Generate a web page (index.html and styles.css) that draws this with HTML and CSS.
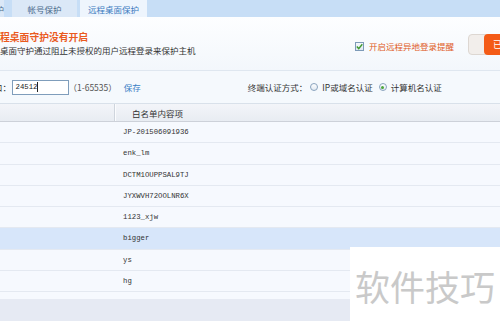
FILE: index.html
```html
<!DOCTYPE html>
<html lang="zh-CN">
<head>
<meta charset="utf-8">
<title>远程桌面保护</title>
<link rel="stylesheet" href="styles.css">
</head>
<body>
<div class="tabs">
  <div class="tab tab-cut">护</div>
  <div class="tab tab-account">帐号保护</div>
  <div class="tab tab-active">远程桌面保护</div>
</div>

<div class="status">
  <div class="status-text">
    <div class="status-title">程桌面守护没有开启</div>
    <div class="status-desc">桌面守护通过阻止未授权的用户远程登录来保护主机</div>
  </div>
  <label class="remind">
    <span class="checkbox">
      <svg width="9" height="9" viewBox="0 0 9 9"><path d="M1.8 4.6 L3.7 6.6 L7.3 2.2" fill="none" stroke="#3f9a2e" stroke-width="1.4"/></svg>
    </span>
    开启远程异地登录提醒
  </label>
  <div class="switch"><span class="switch-on">已开启</span></div>
</div>

<div class="port-row">
  <div class="port-left">
    <span class="port-label">口：</span>
    <span class="input"><span class="mono">24512</span><span class="caret"></span></span>
    <span class="range">（1-65535）</span>
    <a class="save">保存</a>
  </div>
  <div class="auth">
    <span class="auth-label">终端认证方式：</span>
    <span class="radio"></span><span class="radio-text">IP或域名认证</span>
    <span class="radio radio-on"></span><span class="radio-text">计算机名认证</span>
  </div>
</div>

<div class="table">
  <div class="thead">
    <div class="th th-first"></div>
    <div class="th th-name">白名单内容项</div>
  </div>
  <div class="tbody">
    <div class="tr"><div class="td"></div><div class="td mono">JP-201506091936</div></div>
    <div class="tr"><div class="td"></div><div class="td mono">enk_lm</div></div>
    <div class="tr"><div class="td"></div><div class="td mono">DCTM1OUPPSAL9TJ</div></div>
    <div class="tr"><div class="td"></div><div class="td mono">JYXWVH72OOLNR6X</div></div>
    <div class="tr"><div class="td"></div><div class="td mono">1123_xjw</div></div>
    <div class="tr tr-selected"><div class="td"></div><div class="td mono">bigger</div></div>
    <div class="tr"><div class="td"></div><div class="td mono">ys</div></div>
    <div class="tr"><div class="td"></div><div class="td mono">hg</div></div>
  </div>
</div>

<div class="watermark">软件技巧</div>
</body>
</html>
```

FILE: styles.css
```css
* {
  box-sizing: border-box;
  margin: 0;
  padding: 0;
}

body {
  width: 500px;
  height: 321px;
  overflow: hidden;
  position: relative;
  background: #e6eaf3;
  font-family: "Noto Sans CJK SC", sans-serif;
  font-size: 8.5px;
  color: #333;
}

.mono {
  font-family: "Liberation Mono", monospace;
  font-size: 7.3px;
}

/* tabs */
.tabs {
  display: flex;
  height: 17px;
  background: #c7def6;
}

.tab {
  height: 17px;
  display: flex;
  align-items: center;
  justify-content: center;
  background: #dbe8f7;
  color: #4c6b8c;
  white-space: nowrap;
  overflow: hidden;
}

.tab-cut {
  width: 4px;
  justify-content: flex-end;
}

.tab-account {
  width: 65px;
  margin-left: 8px;
}

.tab-active {
  width: 67px;
  margin-left: 3px;
  background: #eef5fd;
  color: #3b7bbf;
}

/* status */
.status {
  height: 53px;
  display: flex;
  align-items: center;
  background: linear-gradient(#fdfeff, #f3f7fc);
}

.status-text {
  flex: 1;
  align-self: flex-start;
  padding-top: 13px;
  white-space: nowrap;
  min-width: 0;
}

.status-title {
  font-size: 9.8px;
  line-height: 14px;
  font-weight: bold;
  color: #ea5a1e;
}

.status-desc {
  line-height: 12px;
  color: #333;
}

.remind {
  display: flex;
  align-items: center;
  gap: 5px;
  margin-top: 5px;
  color: #df5a25;
  white-space: nowrap;
}

.checkbox {
  width: 9px;
  height: 9px;
  border: 1px solid #7d9ab8;
  background: linear-gradient(#f4f8fc, #dfe8f2);
  display: flex;
}

.checkbox svg {
  margin: -1px;
}

.switch {
  flex-shrink: 0;
  width: 62px;
  height: 21px;
  margin-left: 14px;
  margin-right: -30px;
  margin-top: 2px;
  border: 1px solid #ddd7d2;
  border-radius: 4px;
  background: #f2eeeb;
  display: flex;
  justify-content: flex-end;
}

.switch-on {
  width: 46px;
  margin: -1px -1px -1px 0;
  border-radius: 4px 0 0 4px;
  background: #f45b17;
  color: #fff;
  display: flex;
  align-items: center;
  padding-left: 9px;
  font-size: 9px;
  white-space: nowrap;
}

/* port row */
.port-row {
  height: 33px;
  display: flex;
  align-items: center;
  border-top: 1px solid #dfe7f0;
  background: #f5f9fd;
  white-space: nowrap;
}

.port-left {
  display: flex;
  align-items: center;
}

.port-label {
  margin-left: -6px;
}

.input {
  width: 57px;
  height: 15px;
  margin-left: 0.5px;
  border: 1px solid #7f9dbb;
  background: #fff;
  display: flex;
  align-items: center;
  padding-left: 3px;
  color: #222;
}

.caret {
  width: 1px;
  height: 10px;
  background: #222;
}

.range {
  color: #555;
}

.save {
  margin-left: 7px;
  color: #3c7fc6;
}

.auth {
  display: flex;
  align-items: center;
  margin-left: 107px;
}

.auth-label {
  margin-right: 3px;
}

.radio {
  width: 8px;
  height: 8px;
  border: 1px solid #8aa3be;
  border-radius: 50%;
  background: linear-gradient(#fdfeff, #e1e9f2);
  margin-right: 4px;
  display: flex;
  align-items: center;
  justify-content: center;
}

.radio-on::after {
  content: "";
  width: 3px;
  height: 3px;
  border-radius: 50%;
  background: #4aa53a;
}

.radio-text {
  margin-right: 6px;
}

/* table */
.table {
  background: #f6f9fe;
  padding-bottom: 7px;
}

.thead {
  display: grid;
  grid-template-columns: 115px 1fr;
  height: 19px;
  border-top: 1px solid #d9e1ea;
  border-bottom: 1px solid #cdd1d9;
  background: linear-gradient(#f3f5f9, #e8ecf2);
}

.th {
  display: flex;
  align-items: center;
}

.th-first {
  border-right: 1px solid #cfd5dd;
  box-shadow: 1px 0 0 #fbfcfe;
}

.th-name {
  padding-left: 17px;
}

.tr {
  display: grid;
  grid-template-columns: 115px 1fr;
  height: 21.25px;
  border-bottom: 1px solid #e4e9f1;
}

.tr-selected {
  background: #d7e6fa;
}

.td {
  display: flex;
  align-items: center;
  padding-left: 8px;
  color: #333;
}

/* watermark overlay */
.watermark {
  position: absolute;
  left: 350px;
  top: 247px;
  width: 150px;
  height: 74px;
  background: #fff;
  color: #c9c9c9;
  font-size: 35px;
  display: flex;
  align-items: center;
  justify-content: center;
  padding-top: 2px;
}
```
